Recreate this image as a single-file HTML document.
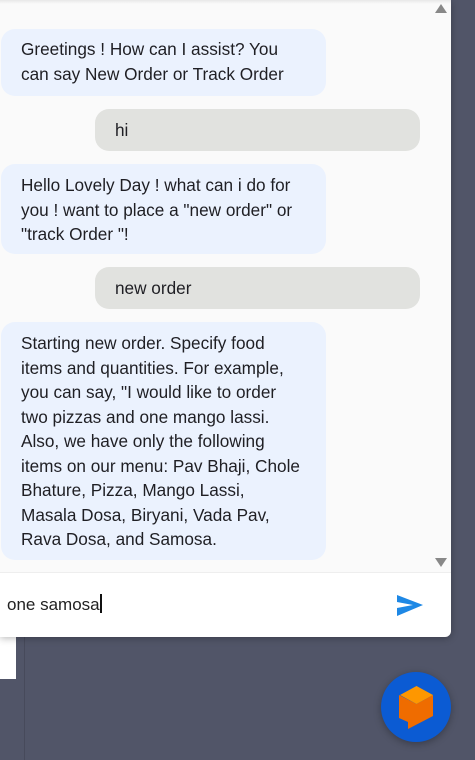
<!DOCTYPE html>
<html><head><style>
body{margin:0;width:475px;height:760px;background:#515568;font-family:"Liberation Sans",sans-serif;position:relative;overflow:hidden}
.panel{position:absolute;left:0;top:0;width:451px;height:636px;background:#fafafa;border-radius:0 0 6px 0;box-shadow:0 2px 8px rgba(0,0,0,.3)}
.b{position:absolute;font-size:17.2px;line-height:24.5px;color:#1f1f24;border-radius:14px;box-sizing:border-box;padding:8px 26px 7px 20px}
.bot{left:1px;width:325px;background:#ebf2fe}
.user{left:95px;width:325px;background:#e1e2df}
.input{position:absolute;left:0;top:572px;width:451px;height:64px;background:#fff;border-top:1px solid #eee;border-radius:0 0 6px 0}
</style></head><body>
<div style="position:absolute;left:0;top:636px;width:16px;height:43px;background:#fff"></div>
<div style="position:absolute;left:24px;top:636px;width:1px;height:124px;background:#474a5b"></div>
<div class="panel">
<div style="position:absolute;left:0;top:0;width:451px;height:4px;background:linear-gradient(#e8e8e8,#fafafa)"></div>
<div style="position:absolute;left:435px;top:4px;width:0;height:0;border-left:6px solid transparent;border-right:6px solid transparent;border-bottom:9px solid #888"></div>
<div style="position:absolute;left:435px;top:558px;width:0;height:0;border-left:6px solid transparent;border-right:6px solid transparent;border-top:9px solid #888"></div>
<div class="b bot" style="top:29px;height:67px;padding-top:8px">Greetings ! How can I assist? You can say New Order or Track Order</div>
<div class="b user" style="top:109px;height:42px;padding-top:9px">hi</div>
<div class="b bot" style="top:164px;height:90px;padding-top:9px">Hello Lovely Day ! what can i do for you ! want to place a "new order" or "track Order "!</div>
<div class="b user" style="top:267px;height:42px;padding-top:9px">new order</div>
<div class="b bot" style="top:322px;height:238px;padding-top:9px">Starting new order. Specify food items and quantities. For example, you can say, "I would like to order two pizzas and one mango lassi. Also, we have only the following items on our menu: Pav Bhaji, Chole Bhature, Pizza, Mango Lassi, Masala Dosa, Biryani, Vada Pav, Rava Dosa, and Samosa.</div>
<div class="input">
<div style="position:absolute;left:7px;top:21px;font-size:17px;color:#222">one samosa<span style="display:inline-block;width:2px;height:19px;background:#111;vertical-align:-3px"></span></div>
<svg style="position:absolute;left:396px;top:21px" width="28" height="24" viewBox="0 0 28 24"><path d="M1 1 L27 11 L1 22 L1 14 L17 11 L1 8 Z" fill="#1e88e5"/></svg>
</div>
</div>
<div style="position:absolute;left:381px;top:672px;width:70px;height:70px;border-radius:50%;background:#0b5bd3;box-shadow:0 2px 8px rgba(0,0,0,.3)"></div>
<svg style="position:absolute;left:398px;top:685px" width="37" height="45" viewBox="0 0 37 45"><path d="M1 10 L18.5 19 L35 10 L35 31 L10 44 L10 37 L1 33 Z" fill="#ef6c00"/><path d="M2 10 L18.5 1 L35 10 L18.5 19 Z" fill="#fe9700"/></svg>
</body></html>
